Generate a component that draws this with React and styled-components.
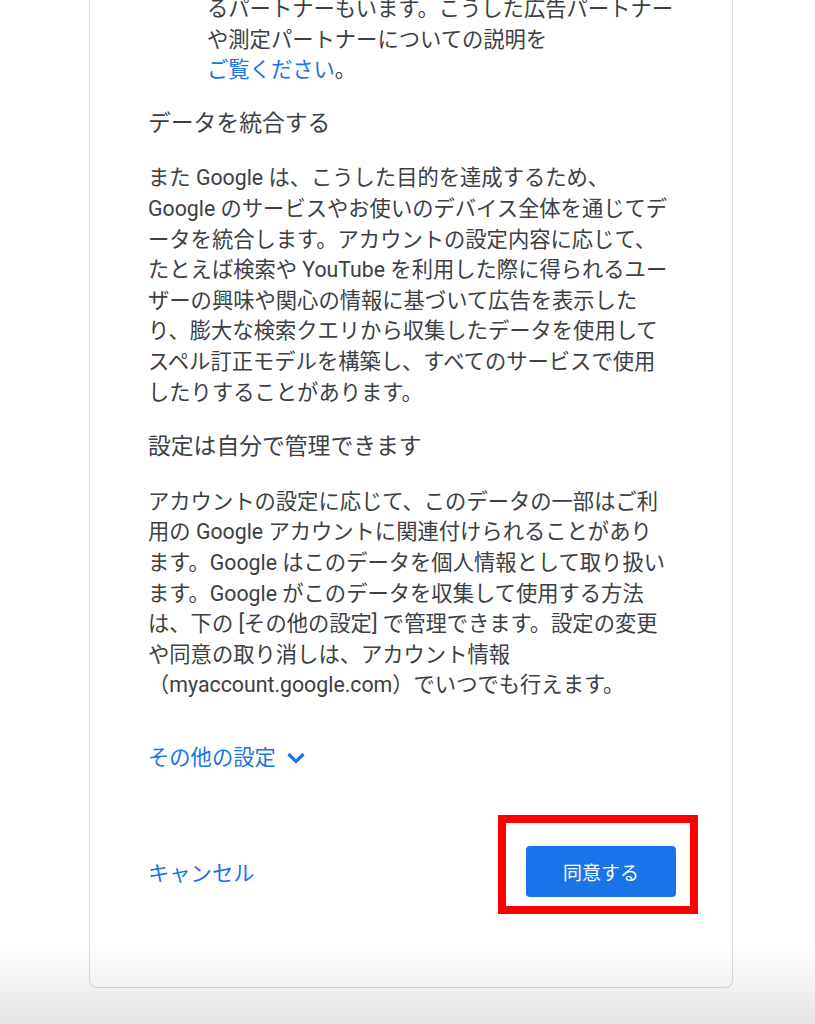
import styled, { createGlobalStyle } from 'styled-components'

const GlobalStyle = createGlobalStyle`
  html, body {
    margin: 0;
    padding: 0;
    background: #fff;
    overflow: hidden;
  }
  body {
    font-family: Roboto, "Noto Sans CJK JP", sans-serif;
    color: #3c4043;
  }
  /* the grey fade at the bottom of the screenshot */
  body::after {
    content: '';
    position: fixed;
    left: 0;
    right: 0;
    bottom: 0;
    height: 80px;
    background: linear-gradient(rgba(0, 0, 0, 0), rgba(0, 0, 0, 0.1));
    pointer-events: none;
  }
`

const Card = styled.div`
  box-sizing: border-box;
  width: 644px;
  margin: -6px 0 0 89px;
  padding: 0 56px 90px 58px;
  border: 1px solid #dadce0;
  border-top: none;
  border-radius: 0 0 8px 8px;
  background: #fff;
`

const Block = styled.div`
  font-size: 21.3px;
  line-height: 30.6px;
  margin-top: ${(p) => p.$gap || 0}px;
  padding-left: ${(p) => p.$indent || 0}px;
`

const Line = styled.div`
  white-space: nowrap;
`

const Heading = styled.h2`
  margin: ${(p) => p.$gap || 0}px 0 0;
  font-size: 22.8px;
  font-weight: 400;
  line-height: 30.6px;
  color: #3c4043;
`

const Link = styled.a`
  color: #1a73e8;
  text-decoration: none;
  cursor: pointer;
`

const MoreSettings = styled.button`
  display: flex;
  align-items: center;
  gap: 10px;
  margin-top: 42px;
  padding: 0;
  border: none;
  background: none;
  font-family: inherit;
  font-size: 21.3px;
  line-height: 30px;
  color: #1a73e8;
  cursor: pointer;
`

const Footer = styled.div`
  display: flex;
  align-items: center;
  justify-content: space-between;
  margin-top: 73px;
`

const TextButton = styled.button`
  padding: 0;
  border: none;
  background: none;
  font-family: inherit;
  font-size: 21.3px;
  color: #1a73e8;
  cursor: pointer;
`

const AgreeWrap = styled.div`
  position: relative;
`

const PrimaryButton = styled.button`
  width: 150px;
  height: 51px;
  border: none;
  border-radius: 4px;
  background: #1a73e8;
  color: #fff;
  font-family: inherit;
  font-size: 19px;
  cursor: pointer;
`

const Highlight = styled.div`
  position: absolute;
  left: -28px;
  top: -31px;
  width: 200px;
  height: 99px;
  box-sizing: border-box;
  border: 8px solid #ff0000;
  pointer-events: none;
`

const Chevron = () => (
  <svg width="20" height="14" viewBox="0 0 20 14" fill="none">
    <path d="M2.5 3 L10 10.5 L17.5 3" stroke="#1a73e8" strokeWidth="3.2" />
  </svg>
)

const mergeLines = [
  'また Google は、こうした目的を達成するため、',
  'Google のサービスやお使いのデバイス全体を通じてデ',
  'ータを統合します。アカウントの設定内容に応じて、',
  'たとえば検索や YouTube を利用した際に得られるユー',
  'ザーの興味や関心の情報に基づいて広告を表示した',
  'り、膨大な検索クエリから収集したデータを使用して',
  'スペル訂正モデルを構築し、すべてのサービスで使用',
  'したりすることがあります。',
]

const controlLines = [
  'アカウントの設定に応じて、このデータの一部はご利',
  '用の Google アカウントに関連付けられることがあり',
  'ます。Google はこのデータを個人情報として取り扱い',
  'ます。Google がこのデータを収集して使用する方法',
  'は、下の [その他の設定] で管理できます。設定の変更',
  'や同意の取り消しは、アカウント情報',
  '（myaccount.google.com）でいつでも行えます。',
]

function App() {
  return (
    <>
      <GlobalStyle />
      <Card>
        <Block $indent={59}>
          <Line>るパートナーもいます。こうした広告パートナー</Line>
          <Line>や測定パートナーについての説明を</Line>
          <Line>
            <Link>ご覧ください</Link>。
          </Line>
        </Block>

        <Heading $gap={23}>データを統合する</Heading>
        <Block $gap={24}>
          {mergeLines.map((l) => (
            <Line key={l}>{l}</Line>
          ))}
        </Block>

        <Heading $gap={24}>設定は自分で管理できます</Heading>
        <Block $gap={24}>
          {controlLines.map((l) => (
            <Line key={l}>{l}</Line>
          ))}
        </Block>

        <MoreSettings>
          その他の設定
          <Chevron />
        </MoreSettings>

        <Footer>
          <TextButton>キャンセル</TextButton>
          <AgreeWrap>
            <PrimaryButton>同意する</PrimaryButton>
            <Highlight />
          </AgreeWrap>
        </Footer>
      </Card>
    </>
  )
}

export default App
